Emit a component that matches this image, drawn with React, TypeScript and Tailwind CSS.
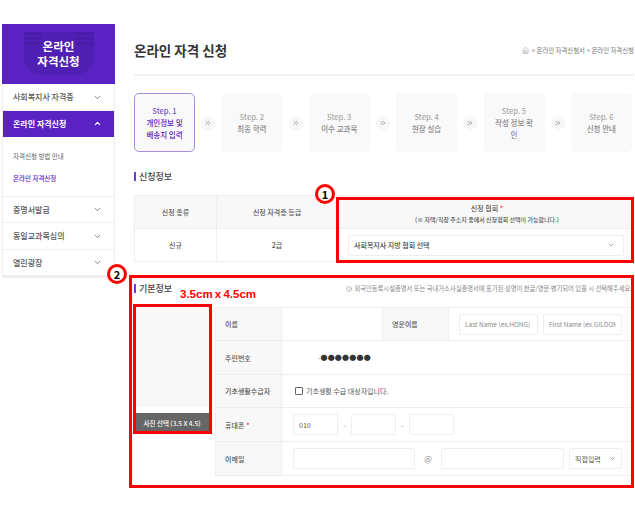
import type React from "react"
import { ChevronDown, ChevronUp, ChevronsRight, Home, Info } from "lucide-react"

const font = { fontFamily: '"Noto Sans CJK KR", "Noto Sans", sans-serif' }

const steps = [
  { no: "Step. 1", label: ["개인정보 및", "배송지 입력"], active: true },
  { no: "Step. 2", label: ["최종 학력"] },
  { no: "Step. 3", label: ["이수 교과목"] },
  { no: "Step. 4", label: ["현장 실습"] },
  { no: "Step. 5", label: ["작성 정보 확", "인"] },
  { no: "Step. 6", label: ["신청 안내"] },
]

function MenuRow({ label, active, tall }: { label: string; active?: boolean; tall?: boolean }) {
  return (
    <div
      className={`flex items-center justify-between pl-[10px] pr-[12px] text-[8px] border-b ${tall ? "h-[27px]" : "h-[26px]"} ${
        active ? "bg-[#5a22c2] text-white border-[#5a22c2] font-bold" : "text-[#555] border-[#eeeeee] font-medium"
      }`}
    >
      <span>{label}</span>
      {active ? <ChevronUp className="w-[9px] h-[9px]" strokeWidth={3} /> : <ChevronDown className="w-[9px] h-[9px] text-[#777]" strokeWidth={2.5} />}
    </div>
  )
}

function SectionTitle({ children }: { children: string }) {
  return (
    <div className="flex items-center gap-[3px] text-[9px] font-medium text-[#444] leading-none">
      <span className="w-[2px] h-[9px] bg-[#6a3fd0]" />
      {children}
    </div>
  )
}

function Field({ className, children }: { className: string; children?: React.ReactNode }) {
  return (
    <div className={`h-[21px] border border-[#eeeeee] rounded-[2px] bg-white flex items-center shrink-0 ${className}`}>
      {children}
    </div>
  )
}

function NameInput({ placeholder }: { placeholder: string }) {
  return (
    <input
      readOnly
      placeholder={placeholder}
      className="w-[79px] h-[21px] border border-[#eeeeee] rounded-[2px] px-[5px] text-[6.5px] outline-none placeholder:text-[#888]"
    />
  )
}

function Label({ children }: { children: React.ReactNode }) {
  return <div className="bg-[#f8f8f8] flex items-center pl-[9px] text-[7px] font-medium text-[#555] border-x border-b border-[#eeeeee]">{children}</div>
}

export default function App() {
  return (
    <div className="relative w-[635px] h-[510px] bg-white overflow-hidden" style={font}>
      <div className="flex pt-[24px] pl-[2px]">
        {/* Sidebar */}
        <aside className="w-[113px] border-x border-b-2 border-[#eeeeee] shrink-0 self-start">
          <div className="relative h-[60px] -mx-px bg-[#5a22c2] flex items-center justify-center overflow-hidden">
            <svg className="absolute left-[21px] top-[8px]" width="72" height="44" viewBox="0 0 72 44">
              <path d="M1 0H71V26C71 37 62 43 50 43H22C10 43 1 37 1 26Z" fill="#5020b4" />
              <rect x="1" y="0" width="18" height="3" fill="#4a1ca8" />
              <rect x="1" y="5" width="18" height="3" fill="#4a1ca8" />
              <rect x="1" y="10" width="18" height="3" fill="#4a1ca8" />
              <rect x="53" y="0" width="18" height="3" fill="#4a1ca8" />
              <rect x="53" y="5" width="18" height="3" fill="#4a1ca8" />
              <rect x="53" y="10" width="18" height="3" fill="#4a1ca8" />
            </svg>
            <div className="relative text-white text-center text-[11.5px] font-bold leading-[15px]">
              온라인
              <br />
              자격신청
            </div>
          </div>
          <MenuRow label="사회복지사 자격증" tall />
          <MenuRow label="온라인 자격신청" active />
          <div className="h-[60px] border-b border-[#eeeeee] pl-[10px] pt-[15px] text-[6.5px] leading-[9px]">
            <div className="text-[#666]">자격신청 방법 안내</div>
            <div className="text-[#5a22c2] mt-[13px] font-medium">온라인 자격신청</div>
          </div>
          <MenuRow label="증명서발급" />
          <MenuRow label="동일교과목심의" tall />
          <MenuRow label="열린광장" />
        </aside>

        {/* Main */}
        <main className="ml-[19px] w-[501px] shrink-0">
          <div className="h-[52px] mr-[1px] pt-[4px] flex items-center justify-between border-b-2 border-[#f3f3f3]">
            <h1 className="text-[13.5px] font-bold text-[#333] leading-none">온라인 자격 신청</h1>
            <div className="flex items-center gap-[2px] text-[6.4px] text-[#777] whitespace-nowrap">
              <Home className="w-[7px] h-[7px] mr-[1px] text-[#999]" />
              <span>&gt; 온라인 자격신청서 &gt; 온라인 자격신청</span>
            </div>
          </div>

          <div className="flex items-center mt-[17px] gap-[6.2px]">
            {steps.map((s, i) => (
              <div key={s.no} className="contents">
                {i > 0 && (
                  <div className="w-[14px] h-[14px] rounded-full bg-[#f7f7f7] flex items-center justify-center shrink-0">
                    <ChevronsRight className="w-[8px] h-[8px] text-[#aaa]" strokeWidth={3} />
                  </div>
                )}
                <div
                  className={`w-[61px] h-[59px] rounded-[5px] bg-[#f9f9f9] flex flex-col items-center justify-center text-center text-[7.5px] font-medium leading-[12px] shrink-0 ${
                    s.active ? "border border-[#a98be0] text-[#5a22c2]" : "text-[#888]"
                  }`}
                >
                  <div className={s.active ? "text-[#7750c8]" : "text-[#aaa]"}>{s.no}</div>
                  {s.label.map((l) => (
                    <div key={l}>{l}</div>
                  ))}
                </div>
              </div>
            ))}
          </div>

          <div className="mt-[20px]">
            <SectionTitle>신청정보</SectionTitle>
          </div>

          <div className="mt-[14px] grid grid-cols-[82px_121px_298px] grid-rows-[33px_32px] border-t border-b border-l border-[#eeeeee] text-[7px] text-[#555] text-center font-medium">
            <div className="bg-[#f8f8f8] flex items-center justify-center border-r border-b border-[#eeeeee]">신청 종류</div>
            <div className="bg-[#f8f8f8] flex items-center justify-center border-r border-b border-[#eeeeee]">신청 자격증 등급</div>
            <div className="bg-[#f8f8f8] flex flex-col items-center justify-center pt-[3px] border-b border-[#eeeeee] leading-[11px]">
              <div>
                신청 협회 <span className="text-red-500">*</span>
              </div>
              <div className="text-[6px]">(※ 자택/직장 주소지 중에서 신청협회 선택이 가능합니다.)</div>
            </div>
            <div className="flex items-center justify-center border-r border-[#eeeeee]">신규</div>
            <div className="flex items-center justify-center border-r border-[#eeeeee]">2급</div>
            <div className="flex items-center pl-[10px]">
              <Field className="w-[276px] justify-between px-[5px] h-[18px] text-[#444] font-medium text-[7px]">
                <span>사회복지사 지방 협회 선택</span>
                <ChevronDown className="w-[8px] h-[8px] text-[#777] mr-[3px]" />
              </Field>
            </div>
          </div>

          <div className="mt-[21px] flex items-center justify-between pr-[3px]">
            <SectionTitle>기본정보</SectionTitle>
            <div className="flex items-center gap-[2px] text-[6.3px] text-[#888] whitespace-nowrap mt-[1px]">
              <Info className="w-[6px] h-[6px]" />
              외국인등록시설증명서 또는 국내거소사실증명서에 표기된 성명이 한글/영문 병기되어 있을 시 선택해주세요.
            </div>
          </div>

          <div className="flex mt-[14px]">
            <div className="w-[74px] h-[127px] ml-[1px] flex flex-col justify-end shrink-0">
              <div className="flex-1 bg-[#f8f8f8] mb-[6px]" />
              <div className="h-[21px] bg-[#666] text-white text-[6.5px] font-medium flex items-center justify-center whitespace-nowrap">
                사진 선택 (3.5 X 4.5)
              </div>
            </div>
            <div className="ml-[6px] w-[420px] border-t border-[#eeeeee] grid grid-cols-[67px_353px] grid-rows-[33px_34px_33px_34px_34px]">
              <Label>이름</Label>
              <div className="border-b border-[#eeeeee] flex">
                <div className="w-[100px]" />
                <div className="w-[67px] bg-[#f8f8f8] border-x border-[#eeeeee] flex items-center pl-[9px] text-[7px] font-medium text-[#555]">영문이름</div>
                <div className="flex items-center pl-[10px] gap-[5px]">
                  <NameInput placeholder="Last Name (ex.HONG)" />
                  <NameInput placeholder="First Name (ex.GILDONG)" />
                </div>
              </div>
              <Label>주민번호</Label>
              <div className="border-b border-[#eeeeee] flex items-center pl-[36px] text-[#333] text-[7px] leading-none">
                <span className="text-[#888]">-</span>
                <span className="tracking-[0.2px]">●●●●●●●</span>
              </div>
              <Label>기초생활수급자</Label>
              <div className="border-b border-[#eeeeee] flex items-center pl-[13px] text-[7px] text-[#555]">
                <span className="w-[8px] h-[8px] border border-[#666] rounded-[1px] mr-[3px]" />
                기초생활 수급 대상자입니다.
              </div>
              <Label>
                휴대폰 <span className="text-red-500 ml-[2px]">*</span>
              </Label>
              <div className="border-b border-[#eeeeee] flex items-center pl-[11px] text-[#888] text-[7px]">
                <Field className="w-[45px] pl-[5px] text-[#555]">010</Field>
                <span className="w-[13px] text-center">-</span>
                <Field className="w-[45px]" />
                <span className="w-[13px] text-center">-</span>
                <Field className="w-[45px]" />
              </div>
              <Label>이메일</Label>
              <div className="border-b border-[#eeeeee] flex items-center pl-[11px] text-[#888]">
                <Field className="w-[122px]" />
                <span className="w-[26px] text-center text-[8px]">@</span>
                <Field className="w-[123px]" />
                <Field className="w-[53px] ml-[5px] pl-[5px] justify-between pr-[5px] text-[#555] text-[7px]">
                  직접입력
                  <ChevronDown className="w-[7px] h-[7px]" />
                </Field>
              </div>
            </div>
          </div>
        </main>
      </div>

      {/* Red callouts laid over the page */}
      <div className="absolute left-[336px] top-[197px] w-[298px] h-[66px] border-[3px] border-[#ff0000]" />
      <div className="absolute left-[129px] top-[275px] w-[505px] h-[213px] border-[3px] border-[#ff0000]" />
      <div className="absolute left-[133px] top-[304px] w-[79px] h-[130px] border-[3px] border-[#ff0000]" />
      <div className="absolute left-[315px] top-[184px] w-[20px] h-[20px] rounded-full border-[3px] border-[#ff0000] bg-white flex items-center justify-center text-[11px] font-bold text-black leading-none">1</div>
      <div className="absolute left-[107px] top-[264px] w-[20px] h-[20px] rounded-full border-[3px] border-[#ff0000] bg-white flex items-center justify-center text-[11px] font-bold text-black leading-none">2</div>
      <div className="absolute left-[180px] top-[287px] text-[11.5px] font-bold text-[#ff0000] leading-[14px] whitespace-nowrap [word-spacing:-1px]" style={{ fontFamily: '"Liberation Sans", sans-serif' }}>
        3.5cm x 4.5cm
      </div>
    </div>
  )
}
